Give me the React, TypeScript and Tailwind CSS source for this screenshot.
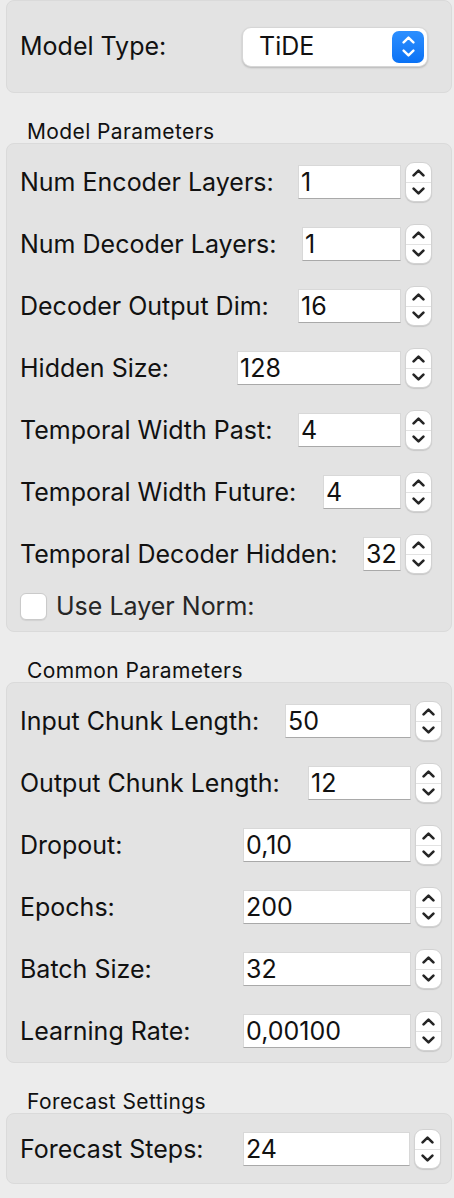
import React from 'react';

type Row = { label: string; value: string; w: string };

const font = { fontFamily: 'Inter, "Liberation Sans", sans-serif' };

const modelRows: Row[] = [
  { label: 'Num Encoder Layers:', value: '1', w: 'w-[103px]' },
  { label: 'Num Decoder Layers:', value: '1', w: 'w-[99px]' },
  { label: 'Decoder Output Dim:', value: '16', w: 'w-[103px]' },
  { label: 'Hidden Size:', value: '128', w: 'w-[164px]' },
  { label: 'Temporal Width Past:', value: '4', w: 'w-[103px]' },
  { label: 'Temporal Width Future:', value: '4', w: 'w-[78px]' },
  { label: 'Temporal Decoder Hidden:', value: '32', w: 'w-[38px]' },
];

const commonRows: Row[] = [
  { label: 'Input Chunk Length:', value: '50', w: 'w-[126px]' },
  { label: 'Output Chunk Length:', value: '12', w: 'w-[103px]' },
  { label: 'Dropout:', value: '0,10', w: 'w-[168px]' },
  { label: 'Epochs:', value: '200', w: 'w-[168px]' },
  { label: 'Batch Size:', value: '32', w: 'w-[168px]' },
  { label: 'Learning Rate:', value: '0,00100', w: 'w-[168px]' },
];

function Chevron({ up, className, sw = 2.6 }: { up?: boolean; className?: string; sw?: number }) {
  return (
    <svg viewBox="0 0 13 8" className={className} fill="none" stroke="currentColor" strokeWidth={sw} strokeLinecap="round" strokeLinejoin="round">
      <path d={up ? 'M1.6 6.4 6.5 1.6l4.9 4.8' : 'M1.6 1.6 6.5 6.4l4.9-4.8'} />
    </svg>
  );
}

function Spinner() {
  return (
    <div className="ml-[4px] flex h-[40px] w-[27px] shrink-0 flex-col overflow-hidden rounded-[9px] border border-[#d2d2d2] bg-white text-[#262626] shadow-[0_1px_1px_rgba(0,0,0,0.12)]">
      <div className="flex flex-1 items-center justify-center border-b border-[#e2e2e2] pt-[1px]">
        <Chevron up className="h-[8px] w-[13px]" />
      </div>
      <div className="flex flex-1 items-center justify-center pb-[1px]">
        <Chevron className="h-[8px] w-[13px]" />
      </div>
    </div>
  );
}

function SpinRow({ row }: { row: Row }) {
  return (
    <div className="flex h-[62px] items-center">
      <span className="shrink-0 whitespace-nowrap">{row.label}</span>
      <div className={`ml-auto flex h-[34px] shrink-0 items-center border border-[#d8d8d8] border-b-[#a9a9a9] bg-white pl-[2px] ${row.w}`}>
        {row.value}
      </div>
      <Spinner />
    </div>
  );
}

function Title({ children }: { children: React.ReactNode }) {
  return <div className="mt-[26px] flex h-[24px] items-center pl-[21px] text-[21px] leading-none tracking-[0.4px] text-[#111]">{children}</div>;
}

export default function App() {
  return (
    <div className="min-h-[1198px] bg-[#ececec] pl-[6px] pr-[2px] text-[25px] leading-none text-[#111]" style={font}>
      <div className="flex h-[93px] items-center rounded-[8px] border border-[#dadada] bg-[#e3e3e3] pl-[13px]">
        <span className="w-[222px]">Model Type:</span>
        <div className="flex h-[40px] w-[186px] items-center rounded-[9px] border border-[#d6d6d6] bg-white pl-[16px] pr-[3px] shadow-[0_1px_2px_rgba(0,0,0,0.2)]">
          <span>TiDE</span>
          <div className="ml-auto flex h-[32px] w-[32px] flex-col items-center justify-center gap-[5px] rounded-[7px] bg-gradient-to-b from-[#2c8fff] to-[#0a72f5] text-white">
            <Chevron up className="h-[8px] w-[13px]" sw={2.4} />
            <Chevron className="h-[8px] w-[13px]" sw={2.4} />
          </div>
        </div>
      </div>

      <Title>Model Parameters</Title>
      <div className="rounded-[8px] border border-[#dadada] bg-[#e3e3e3] pl-[13px] pr-[19px] pt-[7px]">
        {modelRows.map((r) => <SpinRow key={r.label} row={r} />)}
        <div className="flex h-[46px] items-center pb-[4px] text-[#262626]">
          <div className="mr-[9px] h-[27px] w-[27px] rounded-[6px] border border-[#cacaca] bg-white shadow-[0_1px_1px_rgba(0,0,0,0.08)]" />
          <span>Use Layer Norm:</span>
        </div>
      </div>

      <Title>Common Parameters</Title>
      <div className="rounded-[8px] border border-[#dadada] bg-[#e3e3e3] pl-[13px] pr-[9px] pt-[7px]">
        {commonRows.map((r) => <SpinRow key={r.label} row={r} />)}
      </div>

      <div className="mt-[2px]">
        <Title>Forecast Settings</Title>
      </div>
      <div className="rounded-[8px] border border-[#dadada] bg-[#e3e3e3] pb-[3px] pl-[13px] pr-[10px] pt-[4px]">
        <SpinRow row={{ label: 'Forecast Steps:', value: '24', w: 'w-[167px]' }} />
      </div>
    </div>
  );
}
